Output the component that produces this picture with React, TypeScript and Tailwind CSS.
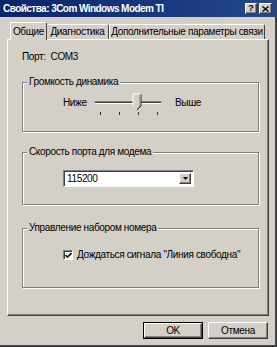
import React from "react";

const raised =
  "border border-t-white border-l-white border-r-[#404040] border-b-[#404040] shadow-[inset_-1px_-1px_0_#808080]";

function Group({ label, className, children }: { label: string; className: string; children?: React.ReactNode }) {
  return (
    <div
      className={
        "relative w-[237px] border border-[#808080] shadow-[1px_1px_0_#fff,inset_1px_1px_0_#fff] " + className
      }
    >
      <span className="absolute -top-[7px] left-[4px] bg-[#d4d0c8] px-[2px] leading-[12px]">{label}</span>
      {children}
    </div>
  );
}

export default function App() {
  return (
    <div className="w-[277px] h-[347px] bg-[#d4d0c8] flex flex-col border-r-[2px] border-b-[2px] border-[#404040] overflow-hidden font-['Liberation_Sans',Arial,sans-serif] text-[10px] tracking-[-0.35px] text-black">
      {/* title bar */}
      <div className="h-[17px] shrink-0 flex items-center bg-gradient-to-r from-[#0a246a] to-[#24478c] pl-[3px] pr-[3px]">
        <span className="flex-1 text-white font-bold text-[10px] tracking-[-0.55px] leading-[12px] whitespace-nowrap">
          Свойства: 3Com Windows Modem TI
        </span>
        <div className={"w-[12px] h-[11px] bg-[#d4d0c8] flex items-center justify-center " + raised}>
          <span className="font-bold text-[9px] leading-[9px] tracking-normal">?</span>
        </div>
        <div className={"ml-[2px] w-[13px] h-[11px] bg-[#d4d0c8] flex items-center justify-center " + raised}>
          <svg width="7" height="6" viewBox="0 0 7 6">
            <path d="M0.5 0.5 L6.5 5.5 M6.5 0.5 L0.5 5.5" stroke="#000" strokeWidth="1.4" />
          </svg>
        </div>
      </div>

      {/* tabs */}
      <div className="mt-[5px] ml-[10px] h-[17px] flex items-end shrink-0">
        <div className="relative z-10 -mb-[1px] h-[18px] w-[37px] bg-[#d4d0c8] border-t border-l border-r border-t-white border-l-white border-r-[#404040] rounded-t-[2px] flex items-start justify-center pt-[3px] leading-[12px]">
          Общие
        </div>
        <div className="h-[15px] w-[62px] border-t border-r border-t-white border-r-[#404040] rounded-t-[2px] flex items-start justify-center pt-[1px] leading-[12px]">
          Диагностика
        </div>
        <div className="h-[15px] w-[156px] border-t border-l border-r border-t-white border-l-white border-r-[#404040] rounded-t-[2px] flex items-start justify-center pt-[1px] leading-[12px] whitespace-nowrap">
          Дополнительные параметры связи
        </div>
      </div>

      {/* panel */}
      <div className="ml-[7px] w-[262px] h-[277px] shrink-0 border border-t-white border-l-white border-r-[#404040] border-b-[#404040] shadow-[inset_-1px_-1px_0_#808080] flex flex-col pl-[14px] pt-[11px]">
        <div className="leading-[12px]">Порт:&nbsp; COM3</div>

        <Group label="Громкость динамика" className="mt-[19px] h-[50px]">
          <div className="flex items-start mt-[9px] ml-[40px]">
            <span className="w-[30px] mt-[5px] leading-[12px]">Ниже</span>
            <svg width="70" height="26" viewBox="0 0 70 26" className="block">
              <rect x="2" y="9" width="66" height="1" fill="#808080" />
              <rect x="2" y="10" width="66" height="1" fill="#404040" />
              <rect x="2" y="11" width="66" height="1" fill="#ffffff" />
              {[7, 26, 45, 64].map((x) => (
                <rect key={x} x={x} y="20" width="1" height="3" fill="#303030" />
              ))}
              <polygon points="40,2 48,2 48,14 44,18 40,14" fill="#d4d0c8" />
              <polyline points="40,14 40,2 48,2" fill="none" stroke="#ffffff" strokeWidth="1" />
              <polyline points="48,2 48,14 44,18" fill="none" stroke="#404040" strokeWidth="1" />
              <polyline points="47,3 47,14 44,17" fill="none" stroke="#808080" strokeWidth="1" />
            </svg>
            <span className="ml-[12px] mt-[5px] leading-[12px]">Выше</span>
          </div>
        </Group>

        <Group label="Скорость порта для модема" className="mt-[20px] h-[53px]">
          <div className="mt-[17px] ml-[40px] w-[131px] h-[17px] bg-white border border-t-[#808080] border-l-[#808080] border-r-white border-b-white shadow-[inset_1px_1px_0_#404040] flex items-center pl-[3px] pr-[2px]">
            <span className="flex-1 leading-[12px]">115200</span>
            <div className={"w-[12px] h-[11px] bg-[#d4d0c8] flex items-center justify-center " + raised}>
              <svg width="5" height="3" viewBox="0 0 5 3">
                <polygon points="0,0 5,0 2.5,3" fill="#000" />
              </svg>
            </div>
          </div>
        </Group>

        <Group label="Управление набором номера" className="mt-[23px] h-[60px]">
          <div className="mt-[20px] ml-[40px] flex items-center">
            <div className="w-[10px] h-[10px] bg-white border border-t-[#808080] border-l-[#808080] border-r-white border-b-white shadow-[inset_1px_1px_0_#404040] flex items-center justify-center">
              <svg width="7" height="7" viewBox="0 0 7 7">
                <polyline points="0.5,3 2.5,5.2 6.5,1" fill="none" stroke="#000" strokeWidth="1.6" />
              </svg>
            </div>
            <span className="ml-[4px] leading-[12px]">Дождаться сигнала "Линия свободна"</span>
          </div>
        </Group>
      </div>

      {/* buttons */}
      <div className="mt-[6px] flex justify-end pr-[7px] gap-[5px]">
        <div className="w-[60px] h-[17px] border border-black">
          <div className={"w-full h-full flex items-center justify-center leading-[12px] " + raised}>OK</div>
        </div>
        <div className={"w-[60px] h-[17px] flex items-center justify-center leading-[12px] " + raised}>Отмена</div>
      </div>
    </div>
  );
}
